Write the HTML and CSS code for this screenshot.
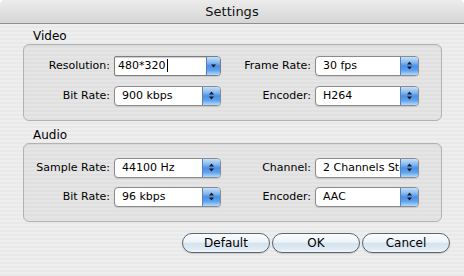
FILE: index.html
```html
<!DOCTYPE html>
<html lang="en">
<head>
  <meta charset="UTF-8" />
  <title>Settings</title>
  <link rel="stylesheet" href="styles.css">
</head>
<body>
  <div class="window">
    <div class="titlebar">Settings</div>

    <div class="content">
      <!-- Video -->
      <div class="group">
        <div class="group-label">Video</div>
        <div class="group-box">
          <label>Resolution:</label>
          <div class="combo">
            <span class="field">480*320<span class="caret"></span></span>
            <span class="combo-btn">
              <svg width="7" height="11" viewBox="0 0 7 11"><path d="M1 4.5 H6 L3.5 7.5 Z" fill="#1a1a1a"/></svg>
            </span>
          </div>
          <label>Frame Rate:</label>
          <div class="popup">
            <span class="value">30 fps</span>
            <span class="cap"><svg width="7" height="11" viewBox="0 0 7 11"><path d="M3.5 1.5 L6 4.5 H1 Z M3.5 9.5 L6 6.5 H1 Z" fill="#1a1a1a"/></svg></span>
          </div>

          <label>Bit Rate:</label>
          <div class="popup">
            <span class="value">900 kbps</span>
            <span class="cap"><svg width="7" height="11" viewBox="0 0 7 11"><path d="M3.5 1.5 L6 4.5 H1 Z M3.5 9.5 L6 6.5 H1 Z" fill="#1a1a1a"/></svg></span>
          </div>
          <label>Encoder:</label>
          <div class="popup">
            <span class="value">H264</span>
            <span class="cap"><svg width="7" height="11" viewBox="0 0 7 11"><path d="M3.5 1.5 L6 4.5 H1 Z M3.5 9.5 L6 6.5 H1 Z" fill="#1a1a1a"/></svg></span>
          </div>
        </div>
      </div>

      <!-- Audio -->
      <div class="group audio">
        <div class="group-label">Audio</div>
        <div class="group-box">
          <label>Sample Rate:</label>
          <div class="popup">
            <span class="value">44100 Hz</span>
            <span class="cap"><svg width="7" height="11" viewBox="0 0 7 11"><path d="M3.5 1.5 L6 4.5 H1 Z M3.5 9.5 L6 6.5 H1 Z" fill="#1a1a1a"/></svg></span>
          </div>
          <label>Channel:</label>
          <div class="popup">
            <span class="value">2 Channels Stereo</span>
            <span class="cap"><svg width="7" height="11" viewBox="0 0 7 11"><path d="M3.5 1.5 L6 4.5 H1 Z M3.5 9.5 L6 6.5 H1 Z" fill="#1a1a1a"/></svg></span>
          </div>

          <label>Bit Rate:</label>
          <div class="popup">
            <span class="value">96 kbps</span>
            <span class="cap"><svg width="7" height="11" viewBox="0 0 7 11"><path d="M3.5 1.5 L6 4.5 H1 Z M3.5 9.5 L6 6.5 H1 Z" fill="#1a1a1a"/></svg></span>
          </div>
          <label>Encoder:</label>
          <div class="popup">
            <span class="value">AAC</span>
            <span class="cap"><svg width="7" height="11" viewBox="0 0 7 11"><path d="M3.5 1.5 L6 4.5 H1 Z M3.5 9.5 L6 6.5 H1 Z" fill="#1a1a1a"/></svg></span>
          </div>
        </div>
      </div>

      <div class="buttons">
        <button class="aqua">Default</button>
        <button class="aqua">OK</button>
        <button class="aqua">Cancel</button>
      </div>
    </div>
  </div>
</body>
</html>
```

FILE: styles.css
```css
body {
  margin: 0;
  background: #ffffff;
  font-family: 'DejaVu Sans', 'Liberation Sans', sans-serif;
  color: #000;
}

.window {
  width: 464px;
  height: 276px;
  border-radius: 5px 5px 0 0;
  overflow: hidden;
  background: repeating-linear-gradient(to bottom, #eeeeee 0 2px, #e9e9e9 2px 4px);
}

.titlebar {
  height: 23px;
  line-height: 23px;
  text-align: center;
  font-size: 13px;
  color: #111;
  background: linear-gradient(to bottom, #ececec, #d6d6d6);
  border-bottom: 1px solid #8f8f8f;
}

.content {
  padding: 0 22px 0 23px;
}

.group-label {
  margin: 5px 0 0 10px;
  height: 15px;
  line-height: 15px;
  font-size: 12px;
}

.audio .group-label {
  margin-top: 7px;
}

.group-box {
  display: grid;
  grid-template-columns: 86px 107px 86px 104px;
  grid-auto-rows: 21px;
  column-gap: 4px;
  row-gap: 9px;
  align-items: center;
  padding: 10px 0 14px 0;
  border: 1px solid #b2b2b2;
  border-radius: 6px;
  background: rgba(0, 0, 0, 0.035);
  box-shadow: inset 0 1px 1px rgba(0, 0, 0, 0.06);
}

.audio .group-box {
  padding-top: 13px;
  row-gap: 8px;
}

.group-box label {
  text-align: right;
  font-size: 11px;
  white-space: nowrap;
}

.popup,
.combo {
  display: flex;
  height: 20px;
  box-sizing: border-box;
  border: 1px solid #8b8b8b;
  border-radius: 4px;
  background: #fff;
  overflow: hidden;
  box-shadow: 0 1px 1px rgba(0, 0, 0, 0.12);
}

.popup .value {
  flex: 1;
  min-width: 0;
  padding-left: 7px;
  font-size: 11px;
  line-height: 18px;
  white-space: nowrap;
  overflow: hidden;
}

.cap,
.combo-btn {
  width: 17px;
  display: flex;
  align-items: center;
  justify-content: center;
  border-left: 1px solid #5a7fb4;
  background: linear-gradient(to bottom, #c7e0fa 0%, #86b9ef 30%, #4a8fe6 50%, #5fa4ee 75%, #b3dafd 100%);
}

.combo {
  border-radius: 2px 4px 4px 2px;
  border-color: #7d7d7d;
}

.combo .field {
  flex: 1;
  padding-left: 3px;
  font-size: 11px;
  line-height: 18px;
  box-shadow: inset 0 1px 1px rgba(0, 0, 0, 0.2);
  display: flex;
  align-items: center;
}

.caret {
  display: inline-block;
  width: 1px;
  height: 13px;
  margin-left: 1px;
  background: #000;
}

.combo-btn {
  width: 13px;
}

.buttons {
  display: flex;
  justify-content: flex-end;
  gap: 2px;
  margin: 11px -8px 0 0;
}

.aqua {
  width: 88px;
  height: 20px;
  padding: 0;
  border: 1px solid #5b6570;
  border-radius: 10px;
  font-family: 'DejaVu Sans', 'Liberation Sans', sans-serif;
  font-size: 12px;
  color: #000;
  background: linear-gradient(to bottom, #fbfdfe 0%, #eef4f9 45%, #d4e3ee 52%, #e0ebf4 85%, #f4f9fc 100%);
  box-shadow: 0 1px 1px rgba(0, 0, 0, 0.15);
}
```
